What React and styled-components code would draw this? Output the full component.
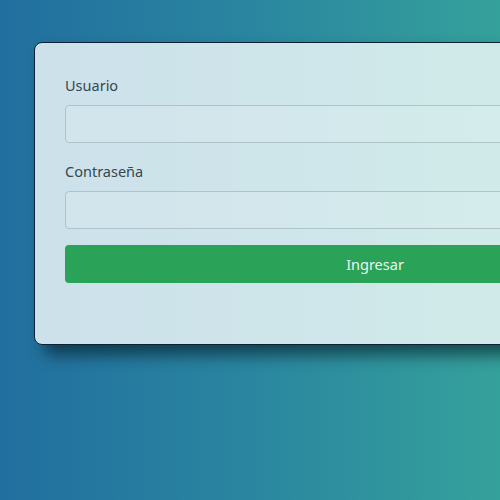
import React from 'react'
import styled, { createGlobalStyle } from 'styled-components'

const GlobalStyle = createGlobalStyle`
  html, body {
    margin: 0;
    padding: 0;
    overflow: hidden;
  }
  body {
    font-family: "Noto Sans", "Open Sans", sans-serif;
  }
`

const Page = styled.main`
  box-sizing: border-box;
  min-height: 100vh;
  padding: 42px 0 0 34px;
  background: linear-gradient(90deg, #216f9f 0%, #2a86a0 50%, #35a19b 100%);
`

const Card = styled.form`
  box-sizing: border-box;
  width: 682px;
  padding: 30px 30px 61px;
  display: flex;
  flex-direction: column;
  background: rgba(248, 252, 252, 0.8);
  border: 1px solid #0e2233;
  border-radius: 8px;
  box-shadow: 10px 10px 16px rgba(0, 20, 30, 0.6);
`

const Field = styled.div`
  display: flex;
  flex-direction: column;
  gap: 8px;
  margin-bottom: 16px;
`

const Label = styled.label`
  font-size: 14.5px;
  line-height: 24px;
  color: #36474f;
`

const Input = styled.input`
  box-sizing: border-box;
  height: 38px;
  padding: 6px 12px;
  font-size: 16px;
  background: rgba(255, 255, 255, 0.1);
  border: 1px solid #b0c3ca;
  border-radius: 4px;
  outline: none;
`

const Button = styled.button`
  height: 38px;
  border: none;
  border-radius: 4px;
  background: #2aa359;
  color: #eaf7ef;
  font-family: inherit;
  font-size: 14.5px;
`

export default function App() {
  return (
    <Page>
      <GlobalStyle />
      <Card onSubmit={e => e.preventDefault()}>
        <Field>
          <Label htmlFor="usuario">Usuario</Label>
          <Input id="usuario" type="text" />
        </Field>
        <Field>
          <Label htmlFor="clave">Contraseña</Label>
          <Input id="clave" type="password" />
        </Field>
        <Button type="submit">Ingresar</Button>
      </Card>
    </Page>
  )
}
